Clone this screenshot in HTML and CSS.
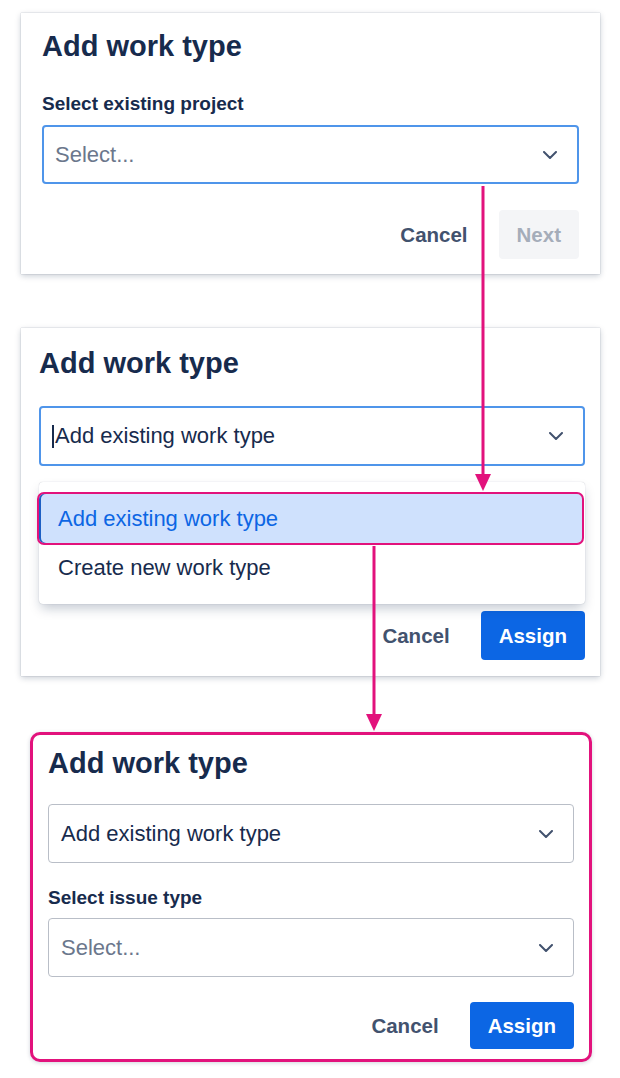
FILE: index.html
```html
<!DOCTYPE html>
<html lang="en">
<head>
<meta charset="utf-8">
<title>Add work type</title>
<link rel="stylesheet" href="styles.css">
</head>
<body>
<div class="flow">

  <!-- Step 1: choose a project -->
  <section class="dialog dialog--step1">
    <h2 class="dialog__title">Add work type</h2>
    <label class="field-label">Select existing project</label>
    <div class="select select--focused">
      <span class="select__placeholder">Select...</span>
      <svg class="select__chevron" viewBox="0 0 14 8" aria-hidden="true"><path d="M1 1l6 6 6-6"/></svg>
    </div>
    <div class="dialog__actions">
      <button class="btn btn--subtle">Cancel</button>
      <button class="btn btn--disabled" disabled>Next</button>
    </div>
  </section>

  <!-- Step 2: choose how to add the work type -->
  <section class="dialog dialog--step2">
    <h2 class="dialog__title">Add work type</h2>
    <div class="select-wrap">
      <div class="select select--focused">
        <span class="select__caret"></span>
        <span class="select__value">Add existing work type</span>
        <svg class="select__chevron" viewBox="0 0 14 8" aria-hidden="true"><path d="M1 1l6 6 6-6"/></svg>
      </div>
      <ul class="menu">
        <li class="menu__option menu__option--selected">Add existing work type</li>
        <li class="menu__option">Create new work type</li>
      </ul>
    </div>
    <div class="dialog__actions dialog__actions--step2">
      <button class="btn btn--subtle">Cancel</button>
      <button class="btn btn--primary">Assign</button>
    </div>
  </section>

  <!-- Step 3: pick the issue type -->
  <section class="dialog dialog--step3">
    <h2 class="dialog__title">Add work type</h2>
    <div class="select">
      <span class="select__value">Add existing work type</span>
      <svg class="select__chevron" viewBox="0 0 14 8" aria-hidden="true"><path d="M1 1l6 6 6-6"/></svg>
    </div>
    <label class="field-label field-label--spaced">Select issue type</label>
    <div class="select">
      <span class="select__placeholder">Select...</span>
      <svg class="select__chevron" viewBox="0 0 14 8" aria-hidden="true"><path d="M1 1l6 6 6-6"/></svg>
    </div>
    <div class="dialog__actions dialog__actions--step3">
      <button class="btn btn--subtle">Cancel</button>
      <button class="btn btn--primary">Assign</button>
    </div>
  </section>

  <!-- connectors between the steps -->
  <svg class="connectors" viewBox="0 0 620 1078" aria-hidden="true">
    <line x1="483" y1="186" x2="483" y2="476"/>
    <polygon points="475,474 491,474 483,491"/>
    <line x1="374" y1="546" x2="374" y2="716"/>
    <polygon points="366,714 382,714 374,731"/>
  </svg>
</div>
</body>
</html>
```

FILE: styles.css
```css
* {
  box-sizing: border-box;
}

html, body {
  margin: 0;
  padding: 0;
  background: #ffffff;
}

body {
  font-family: "Liberation Sans", Arial, sans-serif;
  color: #172b4d;
}

.flow {
  position: relative;
  width: 620px;
  height: 1078px;
  padding-top: 13px;
  display: flex;
  flex-direction: column;
}

/* ---------- dialog cards ---------- */
.dialog {
  position: relative;
  display: flex;
  flex-direction: column;
  background: #ffffff;
  box-shadow: 0 0 1px rgba(9, 30, 66, 0.35), 0 2px 6px rgba(9, 30, 66, 0.22);
}

.dialog--step1 {
  margin-left: 21px;
  width: 579px;
  height: 261px;
  padding: 16px 21px 15px 21px;
}

.dialog--step2 {
  margin-left: 21px;
  margin-top: 54px;
  width: 579px;
  height: 348px;
  padding: 18px 15px 16px 18px;
}

.dialog--step3 {
  margin-left: 30px;
  margin-top: 56px;
  width: 562px;
  height: 330px;
  padding: 11px 15px 10px 15px;
  border: 3px solid #e2127c;
  border-radius: 10px;
  box-shadow: 0 1px 4px rgba(9, 30, 66, 0.18);
}

.dialog__title {
  margin: 0;
  font-size: 29px;
  line-height: 34px;
  font-weight: 700;
  color: #172b4d;
}

.field-label {
  display: block;
  margin-top: 30px;
  font-size: 19px;
  line-height: 22px;
  font-weight: 700;
  color: #172b4d;
}

.field-label--spaced {
  margin-top: 24px;
}

/* ---------- select control ---------- */
.select {
  display: flex;
  align-items: center;
  height: 59px;
  margin-top: 10px;
  padding: 0 20px 0 12px;
  border: 1px solid #b9bec7;
  border-radius: 4px;
  background: #ffffff;
  font-size: 22px;
}

.dialog--step3 .select:first-of-type {
  margin-top: 24px;
}

.dialog--step3 .field-label + .select {
  margin-top: 9px;
}

.select--focused {
  border: 2px solid #4f95ea;
  padding-left: 11px;
}

.dialog--step2 .select {
  height: 60px;
  margin-top: 0;
}

.select-wrap {
  position: relative;
  margin-top: 26px;
}

.select__placeholder {
  flex: 1;
  color: #6b778c;
}

.select__value {
  flex: 1;
  color: #172b4d;
}

.select__caret {
  width: 2px;
  height: 23px;
  margin-right: 1px;
  background: #172b4d;
}

.select__chevron {
  width: 14px;
  height: 8px;
  fill: none;
  stroke: #42526e;
  stroke-width: 2;
  stroke-linecap: round;
  stroke-linejoin: round;
}

/* ---------- dropdown menu ---------- */
.menu {
  position: absolute;
  top: calc(100% + 16px);
  left: 0;
  right: 0;
  margin: 0;
  padding: 10px 0 14px;
  list-style: none;
  background: #ffffff;
  border-radius: 4px;
  box-shadow: 0 0 1px rgba(9, 30, 66, 0.3), 0 6px 12px -2px rgba(9, 30, 66, 0.25);
  z-index: 2;
}

.menu__option {
  display: flex;
  align-items: center;
  height: 45px;
  padding-left: 19px;
  font-size: 22px;
  color: #172b4d;
}

.menu__option--selected {
  height: 53px;
  margin: 0 1px 0 -2px;
  padding-left: 19px;
  background: #cfe1fd;
  color: #0c66e4;
  border: 2px solid #e2127c;
  border-radius: 7px;
  box-shadow: inset 2px 0 0 #1d5fc4;
}

/* ---------- action buttons ---------- */
.dialog__actions {
  display: flex;
  justify-content: flex-end;
  gap: 13px;
  margin-top: 26px;
}

.dialog__actions--step2 {
  margin-top: 145px;
}

.dialog__actions--step3 {
  margin-top: 25px;
}

.btn {
  height: 49px;
  padding: 0 18px;
  border: 0;
  border-radius: 4px;
  background: transparent;
  font-family: inherit;
  font-size: 20.5px;
  font-weight: 700;
  cursor: pointer;
}

.dialog--step3 .btn {
  height: 47px;
}

.btn--subtle {
  color: #42526e;
}

.btn--disabled {
  background: #f4f5f7;
  color: #a5adba;
  cursor: default;
}

.btn--primary {
  background: #0c66e4;
  color: #ffffff;
}

/* ---------- connectors ---------- */
.connectors {
  position: absolute;
  top: 0;
  left: 0;
  width: 620px;
  height: 1078px;
  pointer-events: none;
  z-index: 5;
}

.connectors line {
  stroke: #e2127c;
  stroke-width: 3;
}

.connectors polygon {
  fill: #e2127c;
}
```
